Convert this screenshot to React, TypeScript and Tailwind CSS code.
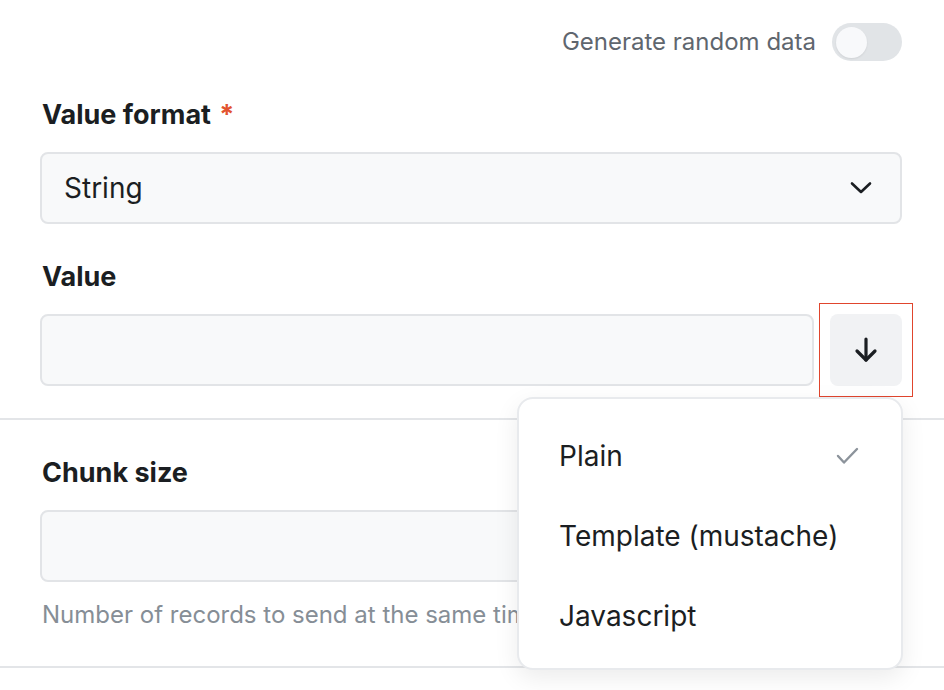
import React from "react";

export default function App() {
  const font = { fontFamily: "Inter, 'Noto Sans', sans-serif" };
  return (
    <div className="relative w-[944px] h-[690px] overflow-hidden bg-white text-[#1b1e22]" style={font}>
      <div className="pl-[40px] pr-[42px]">
        <div className="mt-[23px] h-[38px] flex justify-end items-center gap-[16px]">
          <span className="text-[24px] leading-[32px] text-[#5f666e]">Generate random data</span>
          <div className="w-[70px] h-[38px] rounded-full bg-[#e1e4e7] flex items-center px-[4px]">
            <div className="w-[31px] h-[31px] rounded-full bg-[#f8f9fb] shadow-[0_1px_2px_rgba(0,0,0,0.08)]" />
          </div>
        </div>

        <div className="mt-[38px] pl-[2px] text-[27px] leading-[32px] font-bold">
          Value format <span className="ml-[2px] text-[#e2532f]">*</span>
        </div>
        <div className="mt-[21px] h-[72px] rounded-[8px] border-2 border-[#e2e4e7] bg-[#f8f9fa] flex items-center justify-between pl-[22px] pr-[28px]">
          <span className="text-[28px] leading-[32px]">String</span>
          <svg width="22" height="14" viewBox="0 0 22 14" fill="none" stroke="#1b1e22" strokeWidth="2.6" strokeLinecap="round" strokeLinejoin="round">
            <path d="M2 2.5 L11 11 L20 2.5" />
          </svg>
        </div>

        <div className="mt-[37px] pl-[2px] text-[27px] leading-[32px] font-bold">Value</div>
        <div className="mt-[21px] flex gap-[16px]">
          <div className="flex-1 h-[72px] rounded-[8px] border-2 border-[#e2e4e7] bg-[#f8f9fa]" />
          <div className="-m-[11px] p-[10px] border border-[#e0452d]">
            <div className="w-[72px] h-[72px] rounded-[8px] bg-[#f1f2f4] flex items-center justify-center">
              <svg width="24" height="26" viewBox="0 0 24 26" fill="none" stroke="#1b1e22" strokeWidth="3.2" strokeLinecap="round" strokeLinejoin="round">
                <path d="M12 2 L12 23" />
                <path d="M3 14 L12 23 L21 14" />
              </svg>
            </div>
          </div>
        </div>
      </div>

      <div className="mt-[32px] h-[2px] bg-[#e3e5e8]" />

      <div className="pl-[40px] pr-[42px]">
        <div className="mt-[37px] pl-[2px] text-[27px] leading-[32px] font-bold">Chunk size</div>
        <div className="mt-[21px] h-[72px] rounded-[8px] border-2 border-[#e2e4e7] bg-[#f8f9fa]" />
        <div className="mt-[17px] pl-[2px] text-[24px] leading-[32px] text-[#868e96] whitespace-nowrap">
          Number of records to send at the same time
        </div>
      </div>

      <div className="mt-[35px] h-[2px] bg-[#e3e5e8]" />

      <div className="absolute left-[517px] top-[397px] w-[386px] h-[273px] rounded-[16px] bg-white border-2 border-[#e8eaed] shadow-[0_8px_24px_rgba(0,0,0,0.08)] pt-[17px]">
        <div className="h-[80px] flex items-center justify-between pl-[40px] pr-[42px]">
          <span className="text-[28px] leading-[32px]">Plain</span>
          <svg width="23" height="18" viewBox="0 0 23 18" fill="none" stroke="#8c939b" strokeWidth="2.4" strokeLinecap="round" strokeLinejoin="round">
            <path d="M2 9 L8 15.5 L21 2" />
          </svg>
        </div>
        <div className="h-[80px] flex items-center pl-[40px]">
          <span className="text-[28px] leading-[32px]">Template (mustache)</span>
        </div>
        <div className="h-[80px] flex items-center pl-[40px]">
          <span className="text-[28px] leading-[32px]">Javascript</span>
        </div>
      </div>
    </div>
  );
}
